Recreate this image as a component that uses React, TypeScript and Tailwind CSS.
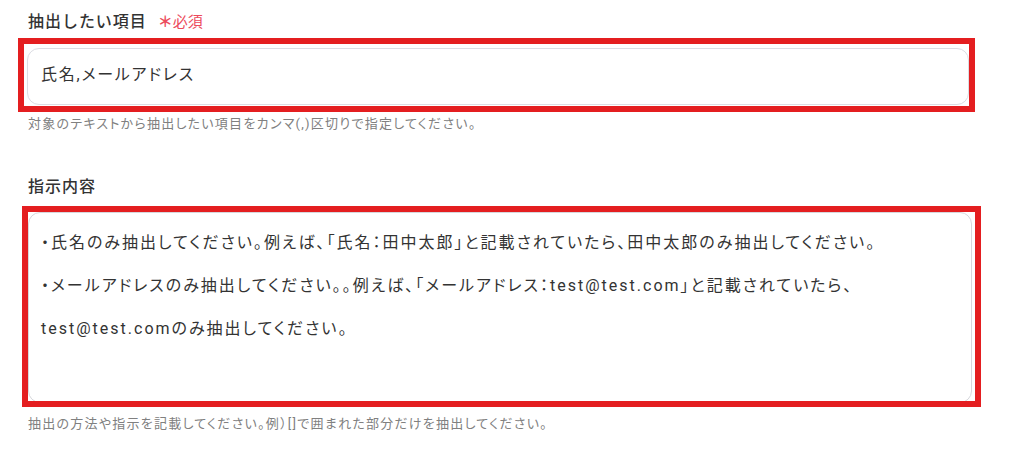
const font = { fontFamily: 'Roboto, "Noto Sans CJK JP", sans-serif' };

export default function App() {
  return (
    <div className="min-h-[457px] w-[1027px] bg-white pl-[28px] pt-[10px] text-[#333]" style={font}>
      {/* 抽出したい項目 */}
      <div className="flex h-[24px] items-center gap-[11px]">
        <span className="text-[16px] font-medium tracking-[0.06em] text-[#333]">抽出したい項目</span>
        <span className="text-[15px] text-[#ec4b5c]">
          <span className="font-bold">＊</span>必須
        </span>
      </div>
      <div className="-ml-[10px] mt-[4px] w-[957px] border-[6px] border-[#e41e20] pb-[1px] pl-[3px] pt-[4px]">
        <div className="flex h-[57px] items-center rounded-[12px] border border-[#dcdde3] bg-white pb-[3px] pl-[13px] text-[16px] tracking-[1.8px] text-[#333] [font-feature-settings:'palt']">
          氏名,メールアドレス
        </div>
      </div>
      <p className="mt-[3px] text-[13px] leading-[18px] tracking-[1.25px] text-[#808080] [font-feature-settings:'palt']">
        対象のテキストから抽出したい項目をカンマ(,)区切りで指定してください。
      </p>

      {/* 指示内容 */}
      <div className="mt-[42px] flex h-[24px] items-center">
        <span className="text-[16px] font-medium tracking-[0.06em] text-[#333]">指示内容</span>
      </div>
      <div className="-ml-[6px] mt-[7px] h-[201px] w-[959px] overflow-hidden border-[6px] border-[#e41e20] pr-[3px]">
        <div className="h-[191px] rounded-[12px] border border-[#d6d7dc] bg-white pl-[12px] pt-[8px] text-[16px] leading-[43px] tracking-[2px] text-[#333] [font-feature-settings:'palt']">
          <div>・氏名のみ抽出してください。例えば、「氏名：田中太郎」と記載されていたら、田中太郎のみ抽出してください。</div>
          <div>・メールアドレスのみ抽出してください。。例えば、「メールアドレス：test@test.com」と記載されていたら、</div>
          <div>test@test.comのみ抽出してください。</div>
        </div>
      </div>
      <p className="mt-[8px] text-[13px] leading-[18px] tracking-[1.25px] text-[#808080] [font-feature-settings:'palt']">
        抽出の方法や指示を記載してください。例）[]で囲まれた部分だけを抽出してください。
      </p>
    </div>
  );
}
